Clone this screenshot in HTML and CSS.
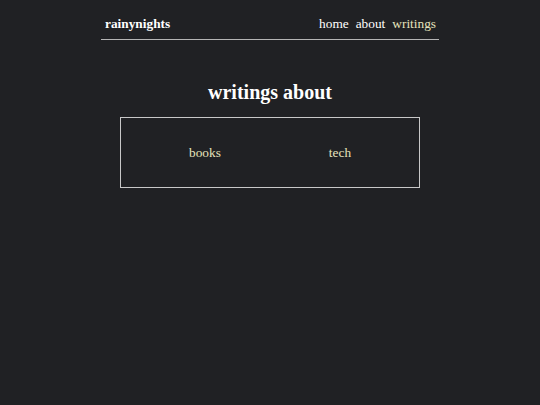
FILE: index.html
```html
<!DOCTYPE html>
<html>
<head>
<meta charset="utf-8">
<link rel="stylesheet" href="styles.css">
</head>
<body>
<div class="page">
  <header class="header">
    <span class="brand">rainynights</span>
    <nav class="nav">
      <a class="nav-link">home</a>
      <a class="nav-link">about</a>
      <a class="nav-link active">writings</a>
    </nav>
  </header>
  <h1 class="title">writings about</h1>
  <div class="box">
    <a class="topic">books</a>
    <a class="topic">tech</a>
  </div>
</div>
</body>
</html>
```
FILE: styles.css
```css
html, body {
  margin: 0;
  padding: 0;
  background: #202124;
}
body {
  font-family: "Liberation Serif", "Times New Roman", serif;
  font-size: 13.33px;
  color: #ffffff;
}
.page {
  width: 338px;
  margin: 0 auto;
  padding-top: 16px;
}
.header {
  display: flex;
  justify-content: space-between;
  align-items: center;
  padding: 0 3px 7px 4px;
  border-bottom: 1px solid #b5b5b5;
}
.brand {
  font-weight: bold;
}
.nav {
  display: flex;
  gap: 7px;
}
.nav-link {
  color: #ffffff;
}
.nav-link.active {
  color: #e6e3bd;
}
.title {
  margin: 40px 0 0 0;
  text-align: center;
  font-size: 20px;
  font-weight: bold;
  line-height: 24px;
}
.box {
  box-sizing: border-box;
  width: 300px;
  height: 71px;
  margin: 13px auto 0 auto;
  border: 1px solid #c8c8c8;
  display: flex;
  align-items: center;
  padding-left: 68px;
}
.topic {
  color: #e6e3bd;
}
.topic + .topic {
  margin-left: 108px;
}
```
